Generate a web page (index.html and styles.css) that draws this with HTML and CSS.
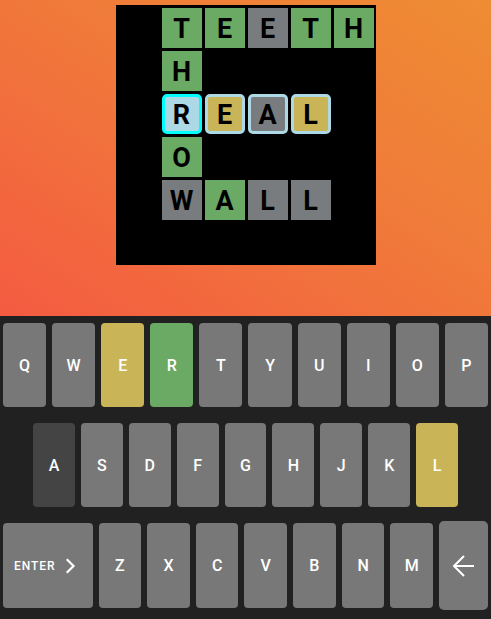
FILE: index.html
```html
<!DOCTYPE html>
<html>
<head>
<meta charset="utf-8">
<link rel="stylesheet" href="styles.css">
</head>
<body>
<div class="app">
  <main class="stage">
    <div class="board">
      <div class="tile"></div><div class="tile g">T</div><div class="tile g">E</div><div class="tile x">E</div><div class="tile g">T</div><div class="tile g">H</div>
      <div class="tile"></div><div class="tile g">H</div><div class="tile"></div><div class="tile"></div><div class="tile"></div><div class="tile"></div>
      <div class="tile"></div><div class="tile cur">R</div><div class="tile y sel">E</div><div class="tile x sel">A</div><div class="tile y sel">L</div><div class="tile"></div>
      <div class="tile"></div><div class="tile g">O</div><div class="tile"></div><div class="tile"></div><div class="tile"></div><div class="tile"></div>
      <div class="tile"></div><div class="tile x">W</div><div class="tile g">A</div><div class="tile x">L</div><div class="tile x">L</div><div class="tile"></div>
      <div class="tile"></div><div class="tile"></div><div class="tile"></div><div class="tile"></div><div class="tile"></div><div class="tile"></div>
    </div>
  </main>
  <div class="keyboard">
    <div class="kb-row">
      <button class="key">Q</button><button class="key">W</button><button class="key k-y">E</button><button class="key k-g">R</button><button class="key">T</button><button class="key">Y</button><button class="key">U</button><button class="key">I</button><button class="key">O</button><button class="key">P</button>
    </div>
    <div class="kb-row mid">
      <button class="key k-d">A</button><button class="key">S</button><button class="key">D</button><button class="key">F</button><button class="key">G</button><button class="key">H</button><button class="key">J</button><button class="key">K</button><button class="key k-y">L</button>
    </div>
    <div class="kb-row last">
      <button class="key enter"><span>ENTER</span><svg width="16" height="16" viewBox="0 0 16 16"><polyline points="1.5,2 7.5,8 1.5,14" fill="none" stroke="#fff" stroke-width="2.2" stroke-linecap="square"/></svg></button><button class="key">Z</button><button class="key">X</button><button class="key">C</button><button class="key">V</button><button class="key">B</button><button class="key">N</button><button class="key">M</button><button class="key back"><svg width="24" height="24" viewBox="0 0 24 24"><path d="M22 12H2.5M12 2 2 12l10 10" fill="none" stroke="#fff" stroke-width="2"/></svg></button>
    </div>
  </div>
</div>
</body>
</html>
```
FILE: styles.css
```css
html, body {
  margin: 0;
  padding: 0;
}
body {
  width: 491px;
  height: 619px;
  overflow: hidden;
  font-family: Roboto, "Liberation Sans", sans-serif;
}
.app {
  display: flex;
  flex-direction: column;
  height: 619px;
}
.stage {
  height: 316px;
  flex: none;
  background: linear-gradient(to top right, #f45b41 0%, #f07a3a 55%, #ee8c33 100%);
  padding-top: 5px;
  box-sizing: border-box;
}
.board {
  width: 260px;
  height: 260px;
  box-sizing: border-box;
  margin: 0 auto;
  background: #000;
  padding: 3px 2px 2px 3px;
  display: grid;
  grid-template-columns: repeat(6, 40px);
  grid-auto-rows: 40px;
  gap: 3px;
}
.tile {
  box-sizing: border-box;
  display: flex;
  align-items: center;
  justify-content: center;
  font-family: Roboto, "Liberation Sans", sans-serif;
  font-weight: 700;
  font-size: 27px;
  color: #000;
  padding-top: 2px;
}
.tile.g { background: #6aaa64; }
.tile.x { background: #787c7e; }
.tile.y { background: #c9b458; }
.tile.sel {
  border: 3px solid #add8e6;
  border-radius: 5px;
}
.tile.cur {
  background: #add8e6;
  border: 3px solid #00ffff;
  border-radius: 5px;
}
.keyboard {
  flex: 1;
  background: #212121;
  padding-top: 7px;
  display: flex;
  flex-direction: column;
  gap: 16px;
}
.kb-row {
  display: flex;
  height: 84px;
}
.kb-row.mid {
  padding: 0 30px;
}
.kb-row.last {
  height: 85px;
}
.key {
  flex: 1 1 0;
  min-width: 0;
  margin: 0 3px;
  padding: 0;
  border: none;
  border-radius: 4px;
  background: #787878;
  color: #fff;
  font-family: Roboto, "Liberation Sans", sans-serif;
  font-weight: 500;
  font-size: 16px;
  display: flex;
  align-items: center;
  justify-content: center;
}
.key.k-y { background: #c9b458; }
.key.k-g { background: #6aaa64; }
.key.k-d { background: #444444; }
.key.enter {
  flex: 2.1 1 0;
  font-size: 12px;
  letter-spacing: 1px;
  gap: 10px;
}
.key.back {
  flex: 1.15 1 0;
  margin-top: -2px;
  margin-bottom: -2px;
  border-radius: 5px;
}
```
